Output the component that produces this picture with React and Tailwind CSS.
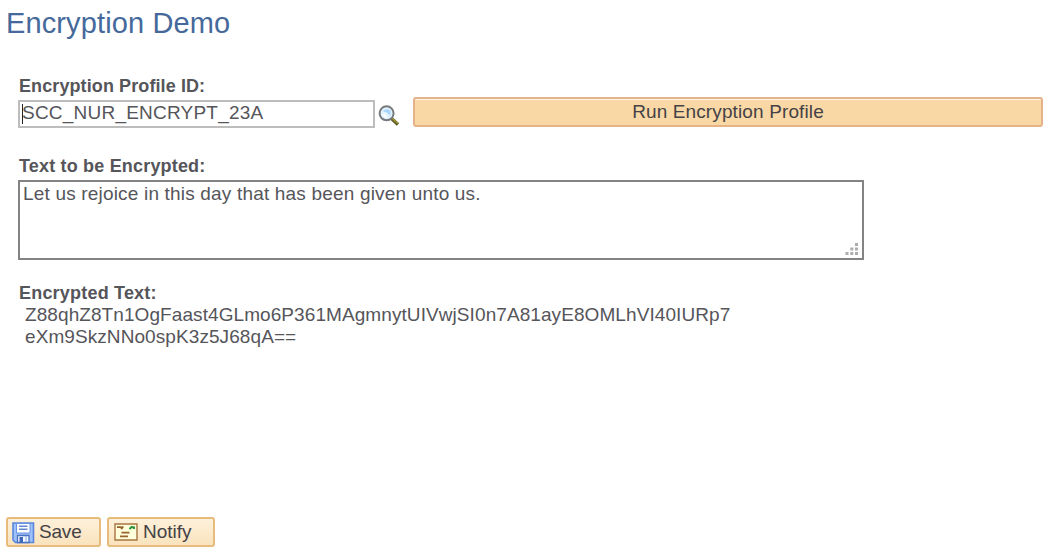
import React from 'react';

const encryptedLines = [
  'Z88qhZ8Tn1OgFaast4GLmo6P361MAgmnytUIVwjSI0n7A81ayE8OMLhVI40IURp7',
  'eXm9SkzNNo0spK3z5J68qA==',
];

function SearchIcon() {
  return (
    <svg width="22" height="22" viewBox="0 0 22 22" fill="none">
      <path d="M13.5 13.5L20 19.5" stroke="#5f5b22" strokeWidth="3.4" />
      <path d="M14 13.2L20 18.6" stroke="#a39a3c" strokeWidth="1.3" />
      <circle cx="8.6" cy="8.3" r="7" fill="#e3f3ff" stroke="#77797c" strokeWidth="2" />
      <path d="M5 6.5C6.5 4 10 3.4 12.5 5.5V11L9 7.5Z" fill="#a9d4fb" />
      <path d="M4.5 9C5 11 6.5 12.6 9 12.8L7 8.5Z" fill="#fff" />
    </svg>
  );
}

function SaveIcon() {
  return (
    <svg width="23" height="22" viewBox="0 0 23 22" fill="none">
      <path d="M1 1H21.5V20.5H3.5L1 18Z" fill="#9fc0fb" stroke="#5a86e0" strokeWidth="1.6" />
      <path d="M4.5 1.5H18V11H4.5Z" fill="#fff" stroke="#6b94e4" />
      <path d="M7 4.3H15.5M7 7.3H15.5" stroke="#6289cf" strokeWidth="1.4" />
      <path d="M5.5 13.5H17V20.5H5.5Z" fill="#f4f8ff" stroke="#4a73c0" strokeWidth="1.3" />
      <path d="M7.5 15H11V20.5H7.5Z" fill="#3f69b8" />
      <path d="M14 14V20" stroke="#88a9e0" />
    </svg>
  );
}

function NotifyIcon() {
  return (
    <svg width="24" height="18" viewBox="0 0 24 18" fill="none">
      <path d="M1 1H23V17H1Z" fill="#ffffdc" stroke="#a87540" strokeWidth="1.4" />
      <path d="M3 4.2H6.5L8.5 6M7.5 4.2H9.5" stroke="#94602a" strokeWidth="1.8" />
      <path d="M15.5 6L17.5 4L20 4.4V6" stroke="#29913a" strokeWidth="2" />
      <path d="M7.5 9.7H15.5M6 13.3H14" stroke="#97652e" strokeWidth="1.7" />
    </svg>
  );
}

function ResizeGrip() {
  return (
    <svg width="14" height="13" viewBox="0 0 14 13" fill="#adadad" className="absolute right-[5px] bottom-[4px]">
      <path d="M10 0h3v3h-3zM5.3 4.5h3v3h-3zM10 4.5h3v3h-3zM.5 9h3v3h-3zM5.3 9h3v3h-3zM10 9h3v3h-3z" />
    </svg>
  );
}

export default function App() {
  return (
    <main className="h-[558px] w-[1054px] overflow-hidden bg-white font-['Liberation_Sans',Arial,sans-serif] text-[19px] leading-[22px] text-[#55555a]">
      <h1 className="h-[75px] pt-[6px] pl-[6px] text-[29px] leading-[34px] tracking-[0.12px] text-[#46699b]">Encryption Demo</h1>

      <form className="pl-[18px]" onSubmit={(e) => e.preventDefault()}>
        <label htmlFor="profile" className="block h-[22px] pl-px text-[18px] font-bold tracking-[0.1px]">Encryption Profile ID:</label>
        <div className="flex h-[58px] items-start">
          <div className="relative mt-[3px] h-[28px] w-[357px]">
            <input
              id="profile"
              defaultValue="SCC_NUR_ENCRYPT_23A"
              className="block h-full w-full border-2 border-[#bdbdbd] pb-[2px] pl-[2px] tracking-[0.22px] outline-none"
            />
            <span className="absolute top-[4px] left-[4px] h-[20px] w-px bg-[#222]" />
          </div>
          <button type="button" aria-label="Look up profile" className="mt-[8px] ml-[3px]">
            <SearchIcon />
          </button>
          <button type="button" className="ml-[13px] h-[30px] w-[630px] rounded-[3px] border-2 border-[#e5b387] bg-[#fad8a5] pb-px tracking-[0.12px] text-[#444247] shadow-[inset_0_1px_0_#fff5e8]">
            Run Encryption Profile
          </button>
        </div>

        <label htmlFor="plain" className="block h-[24px] pl-px text-[18px] font-bold tracking-[0.18px]">Text to be Encrypted:</label>
        <div className="relative mt-px h-[80px] w-[846px]">
          <textarea
            id="plain"
            defaultValue="Let us rejoice in this day that has been given unto us."
            className="block h-full w-full resize-none border-2 border-[#838383] py-[1px] pl-[3px] tracking-[0.18px] outline-none"
          />
          <ResizeGrip />
        </div>

        <h2 className="mt-[22px] pl-px text-[18px] font-bold tracking-[0.2px]">Encrypted Text:</h2>
        <div className="pl-[7px] tracking-[0.08px]">
          {encryptedLines.map((line) => <p key={line}>{line}</p>)}
        </div>
      </form>

      <footer className="mt-[169px] ml-[6px] flex gap-[6px] text-[#444247]">
        <button type="button" className="flex h-[30px] w-[95px] items-center gap-[4px] rounded-[3px] border-2 border-[#e7bb7c] bg-linear-to-b from-[#fdf0da] to-[#fae3bd] pl-[4px]">
          <span className="pt-[2px]"><SaveIcon /></span>
          <span className="pb-px tracking-[-0.2px]">Save</span>
        </button>
        <button type="button" className="flex h-[30px] w-[108px] items-center gap-[5px] rounded-[3px] border-2 border-[#e7bb7c] bg-linear-to-b from-[#fdf0da] to-[#fae3bd] pl-[5px]">
          <NotifyIcon />
          <span className="pb-px">Notify</span>
        </button>
      </footer>
    </main>
  );
}
